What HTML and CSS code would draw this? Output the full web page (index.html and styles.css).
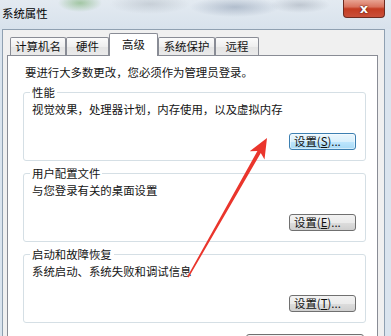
FILE: index.html
```html
<!DOCTYPE html>
<html lang="zh-CN">
<head>
<meta charset="utf-8">
<title>系统属性</title>
<link rel="stylesheet" href="styles.css">
</head>
<body>
<div class="window">
  <div class="titlebar">
    <span class="title">系统属性</span>
    <div class="close"><span>x</span></div>
  </div>
  <div class="client">
    <div class="tabs">
      <div class="tab t1">计算机名</div>
      <div class="tab t2">硬件</div>
      <div class="tab t3 active">高级</div>
      <div class="tab t4">系统保护</div>
      <div class="tab t5">远程</div>
    </div>
    <div class="panel">
      <p class="note">要进行大多数更改，您必须作为管理员登录。</p>
      <section class="group">
        <h3 class="legend">性能</h3>
        <p class="desc">视觉效果，处理器计划，内存使用，以及虚拟内存</p>
        <div class="actions"><button class="btn focus">设置(<u>S</u>)...</button></div>
      </section>
      <section class="group">
        <h3 class="legend">用户配置文件</h3>
        <p class="desc">与您登录有关的桌面设置</p>
        <div class="actions"><button class="btn">设置(<u>E</u>)...</button></div>
      </section>
      <section class="group">
        <h3 class="legend">启动和故障恢复</h3>
        <p class="desc">系统启动、系统失败和调试信息</p>
        <div class="actions"><button class="btn">设置(<u>T</u>)...</button></div>
      </section>
      <div class="bottom-actions"><button class="btn wide" aria-label="环境变量"></button></div>
    </div>
  </div>
  <svg class="arrow" width="391" height="336" viewBox="0 0 391 336" xmlns="http://www.w3.org/2000/svg">
    <polygon points="267,138 264.5,159.6 260.8,152.9 188.6,277.4 187.4,276.6 257.4,150.9 249.7,151.2" fill="#ea352c"/>
  </svg>
</div>
</body>
</html>
```

FILE: styles.css
```css
* { box-sizing: border-box; }
html, body { margin: 0; padding: 0; }
body {
  width: 391px;
  height: 336px;
  overflow: hidden;
  background: #dae4ee;
  font-family: "Noto Sans CJK SC", "Microsoft YaHei", sans-serif;
  font-size: 11.4px;
  color: #141414;
}
.window {
  position: relative;
  width: 391px;
  height: 336px;
  overflow: hidden;
}
.titlebar {
  height: 29px;
  display: flex;
  justify-content: space-between;
  align-items: flex-start;
  background:
    radial-gradient(ellipse 22px 9px at 80px 3px, rgba(110,170,100,0.55), rgba(110,170,100,0) 100%),
    radial-gradient(ellipse 40px 10px at 150px 4px, rgba(120,130,140,0.25), rgba(120,130,140,0) 100%),
    radial-gradient(ellipse 45px 10px at 235px 7px, rgba(90,110,140,0.35), rgba(90,110,140,0) 100%),
    radial-gradient(ellipse 30px 8px at 300px 5px, rgba(110,120,135,0.3), rgba(110,120,135,0) 100%),
    linear-gradient(180deg, #e3eaf1 0%, #d8e2ec 100%);
}
.title {
  margin: 5px 0 0 2px;
  line-height: 16px;
  color: #000;
}
.close {
  width: 42px;
  height: 18px;
  margin-right: 6px;
  border: 1px solid #6e2b20;
  border-top: none;
  border-radius: 0 0 4px 4px;
  background: linear-gradient(180deg, #e8a392 0%, #d9735e 40%, #c43c22 52%, #c9503a 100%);
  display: flex;
  align-items: center;
  justify-content: center;
  color: #fff;
  font: bold 13px/1 "DejaVu Sans", sans-serif;
  text-shadow: 0 0 2px #5a1a10, 0 0 1px #5a1a10;
}
.client {
  width: 383px;
  height: 307px;
  margin-left: 2px;
  border: 1px solid #8fa0b1;
  border-bottom: none;
  background: #f0f0f0;
  padding: 3px 6px 0 4px;
}
.tabs {
  display: flex;
  align-items: flex-end;
  height: 22px;
  margin-left: 3px;
}
.tab {
  height: 18px;
  border: 1px solid #898c95;
  border-bottom: none;
  border-radius: 2px 2px 0 0;
  background: linear-gradient(180deg, #fbfbfb 0%, #efefef 50%, #e4e4e4 52%, #eaeaea 100%);
  text-align: center;
  line-height: 16px;
  color: #111;
}
.t1 { width: 56px; }
.t2 { width: 43px; }
.t3 { width: 49px; }
.t4 { width: 57px; }
.t5 { width: 44px; }
.tab.active {
  height: 23px;
  margin-bottom: -1px;
  background: #fff;
  position: relative;
  z-index: 1;
  padding-top: 2px;
}
.panel {
  height: 300px;
  border: 1px solid #898c95;
  background: #fff;
  padding: 8px 11px 0 15px;
}
.note {
  margin: 0 0 12px 2px;
  line-height: 16px;
}
.group {
  height: 69px;
  border: 1px solid #d5dfe5;
  border-radius: 3px;
  margin-bottom: 12px;
}
.legend {
  margin: -8px 0 0 6px;
  padding: 0 2px;
  width: fit-content;
  background: #fff;
  font-size: inherit;
  font-weight: normal;
  line-height: 14px;
}
.desc {
  margin: 2px 0 0 8px;
  line-height: 16px;
}
.actions {
  display: flex;
  justify-content: flex-end;
  margin-top: 16px;
  padding-right: 9px;
}
.bottom-actions {
  display: flex;
  justify-content: flex-end;
  margin-top: -1px;
  padding-right: 2px;
}
.btn {
  width: 67px;
  height: 17px;
  margin: 0;
  padding: 0 0 0 4px;
  border: 1px solid #707070;
  border-radius: 3px;
  background: linear-gradient(180deg, #f2f2f2 0%, #ebebeb 50%, #dddddd 52%, #cfcfcf 100%);
  font-family: "Noto Sans CJK SC", "Microsoft YaHei", sans-serif;
  font-size: 11.4px;
  line-height: 15px;
  color: #111;
  text-align: left;
}
.btn.focus {
  border-color: #3c7fb1;
  background: linear-gradient(180deg, #eaf6fd 0%, #d9f0fc 50%, #bee6fd 52%, #a7d9f5 100%);
  box-shadow: inset 0 0 0 1px rgba(255,255,255,0.5);
}
.btn.wide { width: 118px; }
.arrow {
  position: absolute;
  left: 0;
  top: 0;
  pointer-events: none;
}
```
